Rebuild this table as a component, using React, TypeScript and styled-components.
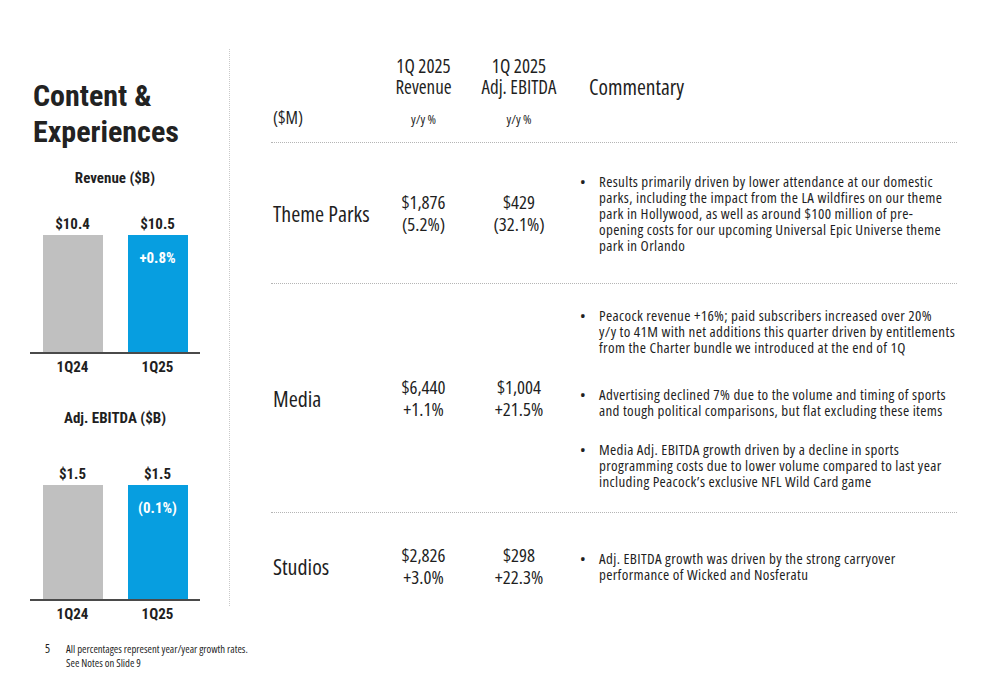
import React from "react";
import styled, { createGlobalStyle } from "styled-components";

const TABLE_FONT = `"Open Sans", "Liberation Sans", sans-serif`;
const SIDE_FONT = `"Roboto", "Liberation Sans", sans-serif`;
const BLUE = "#079ee0";
const GRAY = "#c0c0c0";
const INK = "#1f1f1f";

const GlobalStyle = createGlobalStyle`
  html, body { margin: 0; padding: 0; background: #fff; }
  body {
    width: 1000px;
    height: 685px;
    overflow: hidden;
    font-family: ${TABLE_FONT};
    font-stretch: 75%;
    font-weight: 400;
    color: ${INK};
  }
  * { box-sizing: border-box; }
`;

const Slide = styled.div`
  width: 1000px;
  height: 685px;
  display: flex;
  flex-direction: column;
`;

const Main = styled.div`
  display: flex;
  padding-top: 49px;
`;

const Sidebar = styled.aside`
  width: 230px;
  height: 557px;
  border-right: 1px dotted #c9c9c9;
  display: flex;
  flex-direction: column;
  font-family: ${SIDE_FONT};
  font-stretch: 75%;
`;

const AccentBar = styled.div`
  margin-left: 35px;
  width: 160px;
  height: 4px;
  background: ${BLUE};
`;

const Title = styled.h1`
  margin: 29px 0 0 33px;
  font-size: 30px;
  line-height: 36px;
  font-weight: 700;
  color: #222;
`;

const ChartBox = styled.div<{ $top: number }>`
  width: 170px;
  margin: ${(p) => p.$top}px 0 0 30px;
  display: flex;
  flex-direction: column;
`;

const ChartTitle = styled.div<{ $gap: number }>`
  text-align: center;
  font-weight: 700;
  font-size: 15px;
  line-height: 20px;
  margin-bottom: ${(p) => p.$gap}px;
`;

const BarArea = styled.div`
  display: grid;
  grid-template-columns: 1fr 1fr;
  align-items: end;
  border-bottom: 2px solid #4a4a4a;
`;

const BarColumn = styled.div`
  display: flex;
  flex-direction: column;
  align-items: center;
`;

const ValueLabel = styled.div`
  font-weight: 700;
  font-size: 15px;
  line-height: 18px;
  margin-bottom: 2px;
`;

const Bar = styled.div<{ $h: number; $color: string }>`
  width: 60px;
  height: ${(p) => p.$h}px;
  background: ${(p) => p.$color};
  display: flex;
  justify-content: center;
  padding-top: 14px;
  color: #fff;
  font-weight: 700;
  font-size: 15px;
  line-height: 18px;
`;

const PeriodRow = styled.div`
  display: grid;
  grid-template-columns: 1fr 1fr;
  margin-top: 4px;
`;

const Period = styled.div`
  text-align: center;
  font-weight: 700;
  font-size: 15px;
  line-height: 18px;
`;

type BarDatum = { value: string; delta?: string; color: string };

function Chart({
  title,
  top,
  gap,
  barHeight,
  bars,
}: {
  title: string;
  top: number;
  gap: number;
  barHeight: number;
  bars: BarDatum[];
}) {
  return (
    <ChartBox $top={top}>
      <ChartTitle $gap={gap}>{title}</ChartTitle>
      <BarArea>
        {bars.map((b, i) => (
          <BarColumn key={i}>
            <ValueLabel>{b.value}</ValueLabel>
            <Bar $h={barHeight} $color={b.color}>
              {b.delta}
            </Bar>
          </BarColumn>
        ))}
      </BarArea>
      <PeriodRow>
        <Period>1Q24</Period>
        <Period>1Q25</Period>
      </PeriodRow>
    </ChartBox>
  );
}

const Table = styled.div`
  flex: 1;
  padding: 0 43px 0 41px;
  display: flex;
  flex-direction: column;
`;

const Row = styled.div<{ $h: number; $last?: boolean }>`
  display: grid;
  grid-template-columns: 105px 95px 96px 1fr;
  min-height: ${(p) => p.$h}px;
  align-items: center;
  border-bottom: ${(p) => (p.$last ? "none" : "1px dotted #b5b5b5")};
`;

const HeadRow = styled(Row)`
  align-items: stretch;
`;

const HeadCell = styled.div`
  display: flex;
  flex-direction: column;
  align-items: center;
  padding-top: 7px;
  font-size: 19px;
  line-height: 21px;
  white-space: nowrap;
`;

const UnitCell = styled.div`
  align-self: end;
  padding: 0 0 16px 2px;
  font-size: 17.5px;
  line-height: 18px;
`;

const YoY = styled.div`
  margin-top: 12px;
  font-size: 13px;
  line-height: 18px;
`;

const CommentaryHead = styled.div`
  padding: 26px 0 0 22px;
  font-size: 21.5px;
  line-height: 24px;
`;

const Segment = styled.div`
  padding-left: 2px;
  font-size: 22px;
  line-height: 24px;
  white-space: nowrap;
`;

const Figures = styled.div`
  text-align: center;
  font-size: 18.8px;
  line-height: 22px;
`;

const Bullets = styled.ul`
  margin: 0;
  padding: 0 0 0 16px;
  list-style: none;
`;

const Bullet = styled.li<{ $space: number }>`
  position: relative;
  padding-left: 16px;
  margin-top: ${(p) => p.$space}px;
  font-size: 15px;
  line-height: 16px;
  letter-spacing: 0.35px;
  white-space: nowrap;
  &::before {
    content: "•";
    position: absolute;
    left: -3px;
    top: 0;
  }
`;

const Line = styled.span`
  display: block;
`;

const Footer = styled.footer`
  display: flex;
  gap: 16px;
  margin: 24px 0 0 45px;
`;

const PageNum = styled.div`
  font-size: 12px;
  line-height: 14px;
`;

const Notes = styled.div`
  font-size: 10.7px;
  line-height: 14px;
`;

type RowData = {
  name: string;
  rev: [string, string];
  ebitda: [string, string];
  notes: { lines: string[]; space: number }[];
  h: number;
  last?: boolean;
};

const rows: RowData[] = [
  {
    name: "Theme Parks",
    rev: ["$1,876", "(5.2%)"],
    ebitda: ["$429", "(32.1%)"],
    h: 141,
    notes: [
      {
        lines: [
          "Results primarily driven by lower attendance at our domestic",
          "parks, including the impact from the LA wildfires on our theme",
          "park in Hollywood, as well as around $100 million of pre-",
          "opening costs for our upcoming Universal Epic Universe theme",
          "park in Orlando",
        ],
        space: 0,
      },
    ],
  },
  {
    name: "Media",
    rev: ["$6,440", "+1.1%"],
    ebitda: ["$1,004", "+21.5%"],
    h: 229,
    notes: [
      {
        lines: [
          "Peacock revenue +16%; paid subscribers increased over 20%",
          "y/y to 41M with net additions this quarter driven by entitlements",
          "from the Charter bundle we introduced at the end of 1Q",
        ],
        space: 0,
      },
      {
        lines: [
          "Advertising declined 7% due to the volume and timing of sports",
          "and tough political comparisons, but flat excluding these items",
        ],
        space: 31,
      },
      {
        lines: [
          "Media Adj. EBITDA growth driven by a decline in sports",
          "programming costs due to lower volume compared to last year",
          "including Peacock’s exclusive NFL Wild Card game",
        ],
        space: 23,
      },
    ],
  },
  {
    name: "Studios",
    rev: ["$2,826", "+3.0%"],
    ebitda: ["$298", "+22.3%"],
    h: 105,
    last: true,
    notes: [
      {
        lines: [
          "Adj. EBITDA growth was driven by the strong carryover",
          "performance of Wicked and Nosferatu",
        ],
        space: 0,
      },
    ],
  },
];

export default function App() {
  return (
    <Slide>
      <GlobalStyle />
      <Main>
        <Sidebar>
          <AccentBar />
          <Title>
            Content &amp;
            <br />
            Experiences
          </Title>
          <Chart
            title="Revenue ($B)"
            top={18}
            gap={27}
            barHeight={117}
            bars={[
              { value: "$10.4", color: GRAY },
              { value: "$10.5", delta: "+0.8%", color: BLUE },
            ]}
          />
          <Chart
            title="Adj. EBITDA ($B)"
            top={32}
            gap={37}
            barHeight={114}
            bars={[
              { value: "$1.5", color: GRAY },
              { value: "$1.5", delta: "(0.1%)", color: BLUE },
            ]}
          />
        </Sidebar>
        <Table>
          <HeadRow $h={94}>
            <UnitCell>($M)</UnitCell>
            <HeadCell>
              <div>1Q 2025</div>
              <div>Revenue</div>
              <YoY>y/y %</YoY>
            </HeadCell>
            <HeadCell>
              <div>1Q 2025</div>
              <div>Adj. EBITDA</div>
              <YoY>y/y %</YoY>
            </HeadCell>
            <CommentaryHead>Commentary</CommentaryHead>
          </HeadRow>
          {rows.map((r) => (
            <Row key={r.name} $h={r.h} $last={r.last}>
              <Segment>{r.name}</Segment>
              <Figures>
                <div>{r.rev[0]}</div>
                <div>{r.rev[1]}</div>
              </Figures>
              <Figures>
                <div>{r.ebitda[0]}</div>
                <div>{r.ebitda[1]}</div>
              </Figures>
              <Bullets>
                {r.notes.map((n, i) => (
                  <Bullet key={i} $space={n.space}>
                    {n.lines.map((l, j) => (
                      <Line key={j}>{l}</Line>
                    ))}
                  </Bullet>
                ))}
              </Bullets>
            </Row>
          ))}
        </Table>
      </Main>
      <Footer>
        <PageNum>5</PageNum>
        <Notes>
          All percentages represent year/year growth rates.
          <br />
          See Notes on Slide 9
        </Notes>
      </Footer>
    </Slide>
  );
}
